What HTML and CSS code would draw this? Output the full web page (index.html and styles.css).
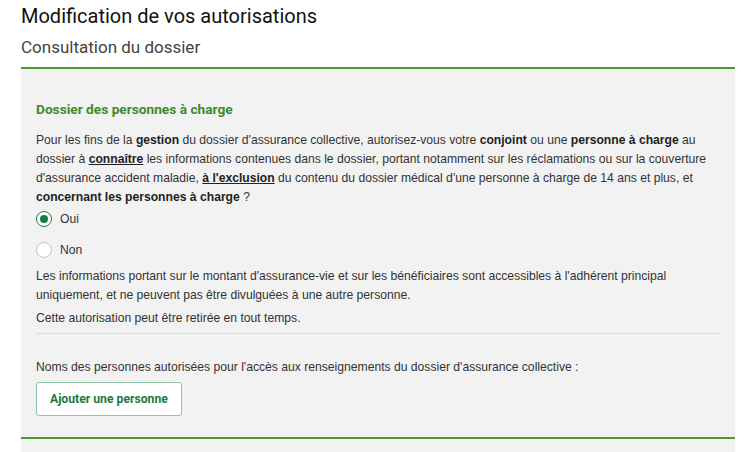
FILE: index.html
```html
<!DOCTYPE html>
<html lang="fr">
<head>
<meta charset="utf-8">
<link rel="stylesheet" href="styles.css">
</head>
<body>
<div class="page">
  <h1 class="title">Modification de vos autorisations</h1>
  <h2 class="subtitle">Consultation du dossier</h2>
  <section class="panel">
    <h3 class="panel-heading">Dossier des personnes à charge</h3>
    <p class="text q">Pour les fins de la <b>gestion</b> du dossier d'assurance collective, autorisez-vous votre <b>conjoint</b> ou une <b>personne à charge</b> au dossier à <b><u>connaître</u></b> les informations contenues dans le dossier, portant notamment sur les réclamations ou sur la couverture d'assurance accident maladie, <b><u>à l'exclusion</u></b> du contenu du dossier médical d'une personne à charge de 14 ans et plus, et <b>concernant les personnes à charge</b> ?</p>
    <div class="radios">
      <label class="radio-row"><span class="radio checked"></span><span>Oui</span></label>
      <label class="radio-row"><span class="radio"></span><span>Non</span></label>
    </div>
    <p class="text info">Les informations portant sur le montant d'assurance-vie et sur les bénéficiaires sont accessibles à l'adhérent principal uniquement, et ne peuvent pas être divulguées à une autre personne.</p>
    <p class="text note">Cette autorisation peut être retirée en tout temps.</p>
    <hr class="sep">
    <p class="text names">Noms des personnes autorisées pour l'accès aux renseignements du dossier d'assurance collective :</p>
    <button class="btn-add" type="button">Ajouter une personne</button>
  </section>
  <section class="panel panel-next"></section>
</div>
</body>
</html>
```

FILE: styles.css
```css
html, body {
  margin: 0;
  padding: 0;
  background: #ffffff;
}
.page {
  padding: 4px 20px 0 21px;
  width: 714px;
}
.title {
  margin: 0;
  font-family: Roboto, "Liberation Sans", sans-serif;
  font-weight: 400;
  font-size: 20px;
  line-height: 24px;
  color: #111;
}
.subtitle {
  margin: 8px 0 9px;
  font-family: Roboto, "Liberation Sans", sans-serif;
  font-weight: 400;
  font-size: 17px;
  line-height: 22px;
  color: #444;
}
.panel {
  background: #f2f2f2;
  border-top: 2px solid #4a9a2e;
  padding: 30px 15px 21px;
}
.panel-next {
  padding: 0;
  height: 20px;
}
.panel-heading {
  margin: 0 0 12px;
  font-family: Roboto, "Liberation Sans", sans-serif;
  font-weight: 700;
  font-size: 13.7px;
  line-height: 20px;
  color: #3d8b2a;
}
.text {
  margin: 0;
  font-family: "Liberation Sans", Arial, sans-serif;
  font-size: 12.15px;
  line-height: 19px;
  color: #333;
}
.text b {
  color: #222;
}
.radios {
  display: flex;
  flex-direction: column;
  gap: 11px;
  margin: 2px 0 7px;
}
.radio-row {
  display: flex;
  align-items: center;
  gap: 8px;
  height: 20px;
  font-family: "Liberation Sans", Arial, sans-serif;
  font-size: 12.15px;
  color: #333;
}
.radio {
  box-sizing: border-box;
  width: 16px;
  height: 16px;
  border-radius: 50%;
  border: 1px solid #c4c4c4;
  background: #fff;
  display: flex;
  align-items: center;
  justify-content: center;
}
.radio.checked {
  border: 1.5px solid #1f7a4a;
}
.radio.checked::after {
  content: "";
  width: 8px;
  height: 8px;
  border-radius: 50%;
  background: #1a7a45;
}
.note {
  margin-top: 4px;
}
.sep {
  margin: 5px 0 0;
  border: 0;
  border-top: 1px solid #dcdcdc;
  height: 0;
}
.names {
  margin-top: 24px;
}
.btn-add {
  display: block;
  margin-top: 5px;
  box-sizing: border-box;
  height: 34px;
  padding: 0 13px;
  background: #fff;
  border: 1px solid #8fc4a5;
  border-radius: 3px;
  font-family: Roboto, "Liberation Sans", sans-serif;
  font-weight: 700;
  font-size: 12.2px;
  color: #1b7a3f;
}
```
